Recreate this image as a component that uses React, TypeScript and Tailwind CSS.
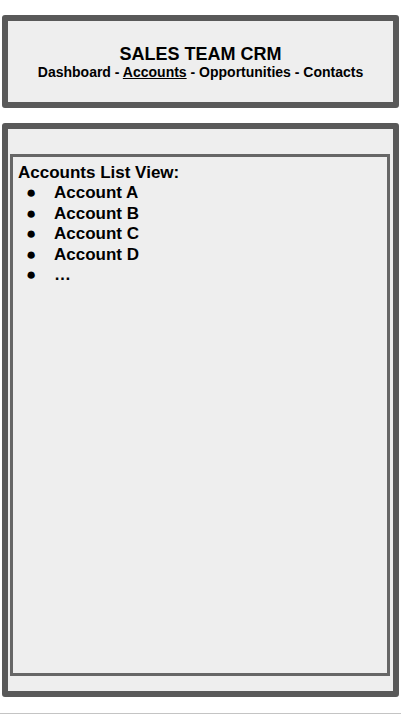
export default function App() {
  const accounts = ['Account A', 'Account B', 'Account C', 'Account D', '…']

  return (
    <div className="min-h-[714px] bg-white font-['Liberation_Sans',Arial,sans-serif] text-black relative">
      <div className="pt-[15px] px-[2px]">
        {/* header */}
        <div className="h-[93px] border-[6px] border-[#595959] rounded-[3px] bg-[#eeeeee] flex flex-col items-center justify-center pt-[2px]">
          <h1 className="text-[18px] leading-[20px] font-bold">SALES TEAM CRM</h1>
          <p className="text-[14px] leading-[17px] font-bold">
            Dashboard - <span className="underline">Accounts</span> - Opportunities - Contacts
          </p>
        </div>

        {/* main */}
        <div className="mt-[15px] h-[574px] border-[6px] border-[#595959] rounded-[3px] bg-[#eeeeee] pt-[25px] pb-[15px] pl-[2px] pr-[3px]">
          <div className="h-full border-[3px] border-[#666666] bg-[#eeeeee] px-[5px] pt-[6px]">
            <h2 className="text-[17px] leading-[20px] font-bold">Accounts List View:</h2>
            <ul>
              {accounts.map((a) => (
                <li key={a} className="flex text-[17px] leading-[20.5px] font-bold">
                  <span className="w-[36px] pl-[8px]">●</span>
                  <span>{a}</span>
                </li>
              ))}
            </ul>
          </div>
        </div>
      </div>
      <div className="absolute left-0 right-0 top-[713px] h-px bg-[#c4c4c4]" />
    </div>
  )
}
